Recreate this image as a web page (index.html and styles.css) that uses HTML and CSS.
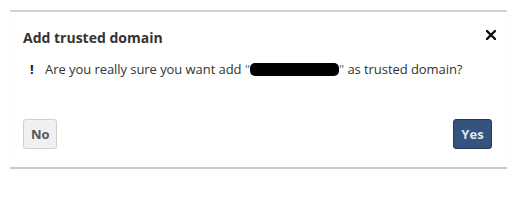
FILE: index.html
```html
<!DOCTYPE html>
<html>
<head>
<meta charset="utf-8">
<link rel="stylesheet" href="styles.css">
</head>
<body>
<div class="dialog">
  <div class="header">
    <h1 class="title">Add trusted domain</h1>
    <button class="close" aria-label="Close">
      <svg width="10" height="10" viewBox="0 0 10 10"><path d="M1 1 L9 9 M9 1 L1 9" stroke="#111" stroke-width="2.4" stroke-linecap="square"/></svg>
    </button>
  </div>
  <div class="message">
    <span class="bang">!</span>
    <span class="text">Are you really sure you want add <span class="q">"</span><span class="redact"></span><span class="q">"</span> as trusted domain?</span>
  </div>
  <div class="footer">
    <button class="btn btn-no">No</button>
    <button class="btn btn-yes">Yes</button>
  </div>
</div>
</body>
</html>
```
FILE: styles.css
```css
html, body {
  margin: 0;
  padding: 0;
  background: #fff;
}
body {
  padding-top: 10px;
  font-family: "Open Sans", "Liberation Sans", sans-serif;
  color: #333;
}
.dialog {
  margin-left: 10px;
  width: 497px;
  border-top: 2px solid #d2d2d2;
  border-bottom: 2px solid #cbcbcb;
  box-shadow: 0 2px 2px -1px rgba(0,0,0,0.12);
  background: #fff;
}
.header {
  display: flex;
  justify-content: space-between;
  align-items: flex-start;
  padding: 16px 11px 0 13px;
}
.title {
  margin: 0;
  font-size: 14px;
  line-height: 20px;
  font-weight: 700;
  color: #333;
}
.close {
  border: 0;
  background: none;
  padding: 0;
  margin-top: 2px;
  width: 10px;
  height: 10px;
  display: flex;
}
.message {
  display: flex;
  align-items: baseline;
  margin-top: 12px;
  padding-left: 20px;
  font-size: 13px;
  line-height: 18px;
  letter-spacing: -0.06px;
}
.bang {
  font-weight: 700;
  color: #111;
  width: 15px;
}
.q {
  color: #3d6fb6;
}
.redact {
  display: inline-block;
  width: 89px;
  height: 13px;
  background: #000;
  border-radius: 5px;
  vertical-align: -2px;
}
.footer {
  display: flex;
  justify-content: space-between;
  padding: 41px 15px 18px 13px;
}
.btn {
  height: 30px;
  border-radius: 3px;
  font-family: "Open Sans", "Liberation Sans", sans-serif;
  font-size: 13px;
  font-weight: 700;
  padding: 0 7px;
}
.btn-no {
  background: #f0f0f0;
  border: 1px solid #cfcfcf;
  color: #555;
  width: 34px;
}
.btn-yes {
  background: #34547d;
  border: 1px solid #243c5c;
  color: #dfe6ee;
  width: 39px;
}
```
